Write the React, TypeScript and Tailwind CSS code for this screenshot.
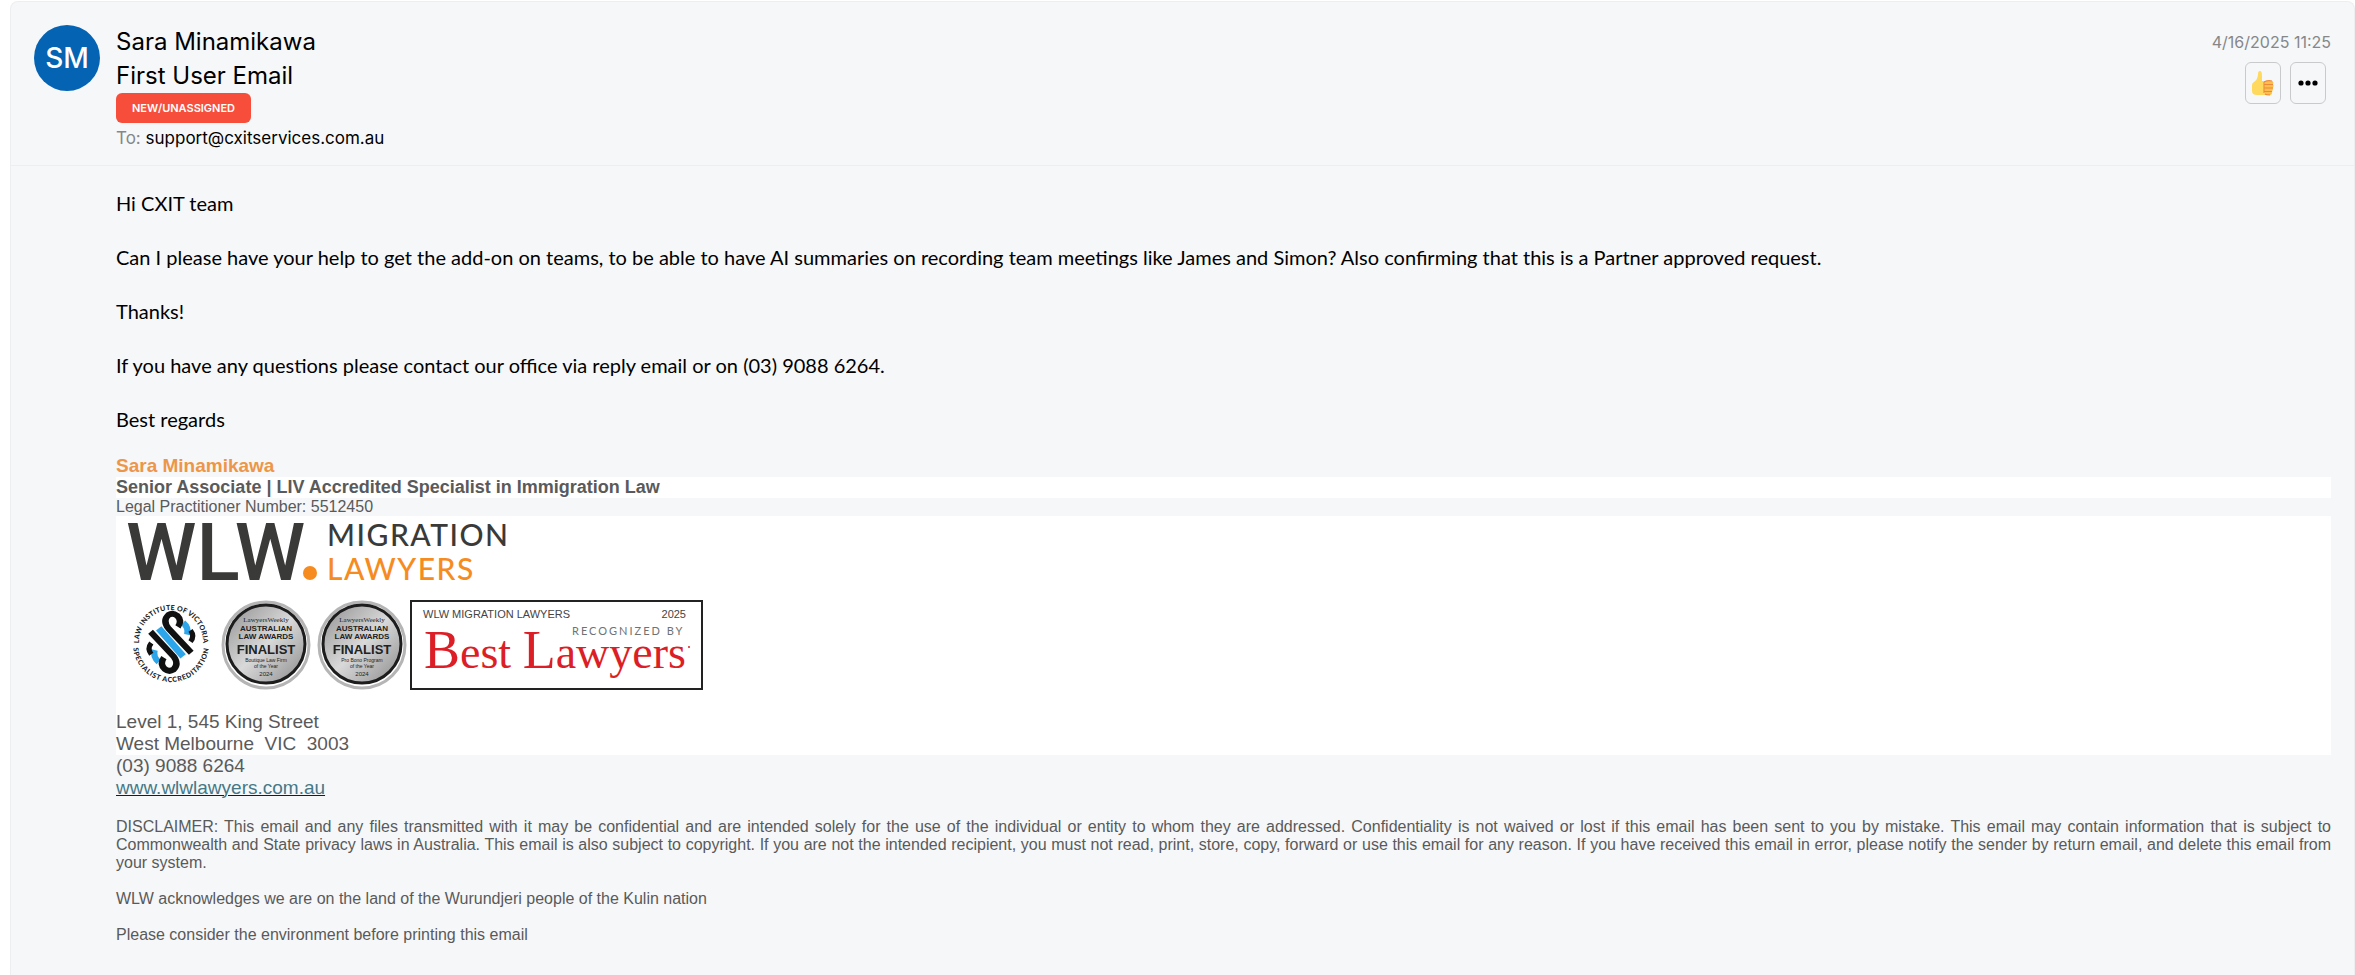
const bodyLines = [
  'Hi CXIT team',
  'Can I please have your help to get the add-on on teams, to be able to have AI summaries on recording team meetings like James and Simon? Also confirming that this is a Partner approved request.',
  'Thanks!',
  'If you have any questions please contact our office via reply email or on (03) 9088 6264.',
  'Best regards',
];

const closingNotes = [
  'DISCLAIMER: This email and any files transmitted with it may be confidential and are intended solely for the use of the individual or entity to whom they are addressed. Confidentiality is not waived or lost if this email has been sent to you by mistake. This email may contain information that is subject to Commonwealth and State privacy laws in Australia. This email is also subject to copyright. If you are not the intended recipient, you must not read, print, store, copy, forward or use this email for any reason. If you have received this email in error, please notify the sender by return email, and delete this email from your system.',
  'WLW acknowledges we are on the land of the Wurundjeri people of the Kulin nation',
  'Please consider the environment before printing this email',
];

function ThumbsUp() {
  return (
    <svg width="22" height="25" viewBox="0 0 22 25" aria-hidden="true">
      <path d="M0 14Q0 12 2 11Q6 8 6 3Q6 0 8 0Q10 0 10 5L10 10L19 10Q22 10 21 13L20 22Q20 24 17 24L5 24Q0 24 0 20Z" fill="#ffd95e" />
      <path d="M13 10h6q3 0 2 3 1 2 0 4 0 2-1 3 0 3-2 4h-4q-2-1-1-3-2-2 0-4-2-2 0-4-2-2 0-3z" fill="#fdbd4c" />
      <path d="M20 10q-4-1-8 1M21 13.500h-9M21 17h-9M20 20.500h-8M18 24q-4 0-5-1M12 11v11" fill="none" stroke="#ec8a3c" strokeWidth="1.100" />
    </svg>
  );
}

function MoreDots() {
  return (
    <svg width="20" height="6" viewBox="0 0 20 6" aria-hidden="true">
      <circle cx="3" cy="3" r="2.600" />
      <circle cx="10" cy="3" r="2.600" />
      <circle cx="17" cy="3" r="2.600" />
    </svg>
  );
}

function FirmLogo() {
  return (
    <svg width="396" height="74" viewBox="0 0 396 74" role="img" aria-label="WLW Migration Lawyers">
      <g fill="#3a3a39">
        <text x="10" y="64" className="font-['Roboto'] text-[80px] font-medium">WLW</text>
        <text x="211" y="30" className="font-['Lato'] text-[30px] font-medium tracking-wider">MIGRATION</text>
      </g>
      <circle cx="194" cy="57" r="7" fill="#f68b1f" />
      <text x="211" y="64" fill="#f68b1f" className="font-['Lato'] text-[30px] font-medium tracking-wider">LAWYERS</text>
    </svg>
  );
}

function AccreditationMark() {
  return (
    <svg width="90" height="90" viewBox="0 0 90 90" role="img" aria-label="Law Institute of Victoria Specialist Accreditation">
      <defs>
        <path id="ring-top" d="M12 50 A32 32 0 1 1 74 50" />
        <path id="ring-bottom" d="M5 44 A38 38 0 1 0 81 44" />
      </defs>
      <g fill="#222" className="font-['Lato'] text-[7px] font-black">
        <text textAnchor="middle" className="tracking-wide">
          <textPath href="#ring-top" startOffset="50%">LAW INSTITUTE OF VICTORIA</textPath>
        </text>
        <text textAnchor="middle" className="tracking-widest">
          <textPath href="#ring-bottom" startOffset="50%">SPECIALIST ACCREDITATION</textPath>
        </text>
      </g>
      {/* Woven ribbon emblem */}
      <g transform="translate(-10 -6) scale(.37 .35)" fill="none" strokeWidth="17">
        <path d="M176 82Q192 96 187 116M110 194Q94 180 99 160" stroke="#2da5ea" />
        <path d="M196 104Q208 120 196 136M90 172Q78 156 90 140" stroke="#111" strokeWidth="14" />
        <path d="M88 108L150 178Q166 200 150 216Q138 224 126 214Q112 200 124 182" stroke="#111" />
        <path d="M198 168L136 98Q120 76 136 60Q148 52 160 62Q174 76 162 94" stroke="#111" />
        <path d="M110 98L176 178" stroke="#2da5ea" strokeWidth="19" />
      </g>
    </svg>
  );
}

function AwardSeal({ id, category, detail }: { id: string; category: string; detail: string }) {
  return (
    <svg width="96" height="90" viewBox="0 0 96 90" role="img" aria-label={`Australian Law Awards Finalist, ${category} ${detail}`}>
      <defs>
        <linearGradient id={id} x1="0" y1="0" x2="1" y2="1">
          <stop offset="0" stopColor="#8f8f8f" />
          <stop offset=".5" stopColor="#d9d9d9" />
          <stop offset="1" stopColor="#8a8a8a" />
        </linearGradient>
      </defs>
      <circle cx="48" cy="45" r="43" fill="#fff" stroke="#b5b5b5" strokeWidth="3" />
      <circle cx="48" cy="44" r="39" fill={`url(#${id})`} stroke="#1d1d1d" strokeWidth="3" />
      <g fill="#222" textAnchor="middle" className="font-['Liberation_Sans']">
        <text x="48" y="22" className="font-['Liberation_Serif'] text-[7px]">LawyersWeekly</text>
        <text x="48" y="31" className="text-[8px] font-bold">AUSTRALIAN</text>
        <text x="48" y="39" className="text-[8px] font-bold">LAW AWARDS</text>
        <text x="48" y="54" className="text-[13px] font-bold">FINALIST</text>
        <text x="48" y="62" className="text-[5px]">{category}</text>
        <text x="48" y="68" className="text-[5px]">{detail}</text>
        <text x="48" y="76" className="text-[6px]">2024</text>
      </g>
    </svg>
  );
}

function BestLawyers() {
  return (
    <svg width="293" height="90" viewBox="0 0 293 90" role="img" aria-label="Recognized by Best Lawyers 2025">
      <rect x="1" y="1" width="291" height="88" fill="#fff" stroke="#222" strokeWidth="2" />
      <g fill="#444" className="font-['Liberation_Sans'] text-[11px]">
        <text x="13" y="18">WLW MIGRATION LAWYERS</text>
        <text x="276" y="18" textAnchor="end">2025</text>
      </g>
      <text x="162" y="35" fill="#6d7375" className="font-['Lato'] text-[11px] tracking-[2px]">RECOGNIZED BY</text>
      <text x="14" y="68" fill="#dc1f26" className="font-['Liberation_Serif'] text-[46px]">
        <tspan className="text-[54px]">B</tspan>est <tspan className="text-[54px]">L</tspan>awyers
      </text>
      <circle cx="279" cy="47" r="1" fill="#dc1f26" />
    </svg>
  );
}

export default function App() {
  return (
    <main className="bg-white pt-px pl-[10px] text-black">
      <article className="min-h-[974px] rounded-t-lg border border-b-0 border-[#eceef0] bg-[#f5f7f9]">
        <header className="flex items-start justify-between border-b border-[#eceef0] pt-[23px] pr-[23px] pb-3 pl-[23px] font-['Inter',sans-serif]">
          <div className="flex items-start gap-4">
            <div className="flex size-[66px] shrink-0 items-center justify-center rounded-full bg-[#0463b3] text-[28px] font-medium text-white">SM</div>
            <div>
              <h2 className="text-[24px] leading-[34px]">Sara Minamikawa</h2>
              <h1 className="text-[24px] leading-[34px]">First User Email</h1>
              <div className="flex h-[30px] w-[135px] items-center justify-center rounded-md bg-[#f64e3b] text-[11px] font-semibold text-white">NEW/UNASSIGNED</div>
              <p className="text-[17px] leading-[30px]">
                <span className="text-[#868788]">To:</span> support@cxitservices.com.au
              </p>
            </div>
          </div>
          <div className="flex flex-col items-end">
            <time className="text-[16px] leading-[34px] text-[#868788]">4/16/2025 11:25</time>
            <div className="flex gap-[9px] pt-[3px] pr-[5px]">
              <button type="button" aria-label="React with thumbs up" className="flex h-[42px] w-9 items-center justify-center rounded-md border border-[#c8cacc]">
                <ThumbsUp />
              </button>
              <button type="button" aria-label="More actions" className="flex h-[42px] w-9 items-center justify-center rounded-md border border-[#c8cacc]">
                <MoreDots />
              </button>
            </div>
          </div>
        </header>

        <section className="pt-6 pr-[23px] pb-8 pl-[105px] font-['Liberation_Sans',Arial,sans-serif] text-[#5a5a5a]">
          <div className="flex flex-col gap-[27px] font-['Lato',sans-serif] text-[20px] leading-[27px] text-black">
            {bodyLines.map((line) => (
              <p key={line}>{line}</p>
            ))}
          </div>

          {/* Signature */}
          <div className="pt-[22px]">
            <p className="text-[19px] leading-[22px] font-bold text-[#ed9647]">Sara Minamikawa</p>
            <p className="bg-white text-[18px] leading-[21px] font-bold">Senior Associate | LIV Accredited Specialist in Immigration Law</p>
            <p className="text-[16px] leading-[18px]">Legal Practitioner Number: 5512450</p>
            <div className="bg-white">
              <FirmLogo />
              <div className="flex pt-[10px] pb-[21px] pl-3">
                <AccreditationMark />
                <AwardSeal id="seal-boutique" category="Boutique Law Firm" detail="of the Year" />
                <AwardSeal id="seal-probono" category="Pro Bono Program" detail="of the Year" />
                <BestLawyers />
              </div>
              <address className="text-[19px] leading-[22px] whitespace-pre not-italic">{'Level 1, 545 King Street\nWest Melbourne  VIC  3003'}</address>
            </div>
            <p className="text-[19px] leading-[22px]">(03) 9088 6264</p>
            <p className="text-[19px] leading-[22px]">
              <a href="#" className="text-[#467886] underline decoration-[#0000ee] decoration-1">www.wlwlawyers.com.au</a>
            </p>
          </div>

          <div className="flex flex-col gap-[18px] pt-[19px] text-justify text-[16px] leading-[18px]">
            {closingNotes.map((note) => (
              <p key={note}>{note}</p>
            ))}
          </div>
        </section>
      </article>
    </main>
  );
}
